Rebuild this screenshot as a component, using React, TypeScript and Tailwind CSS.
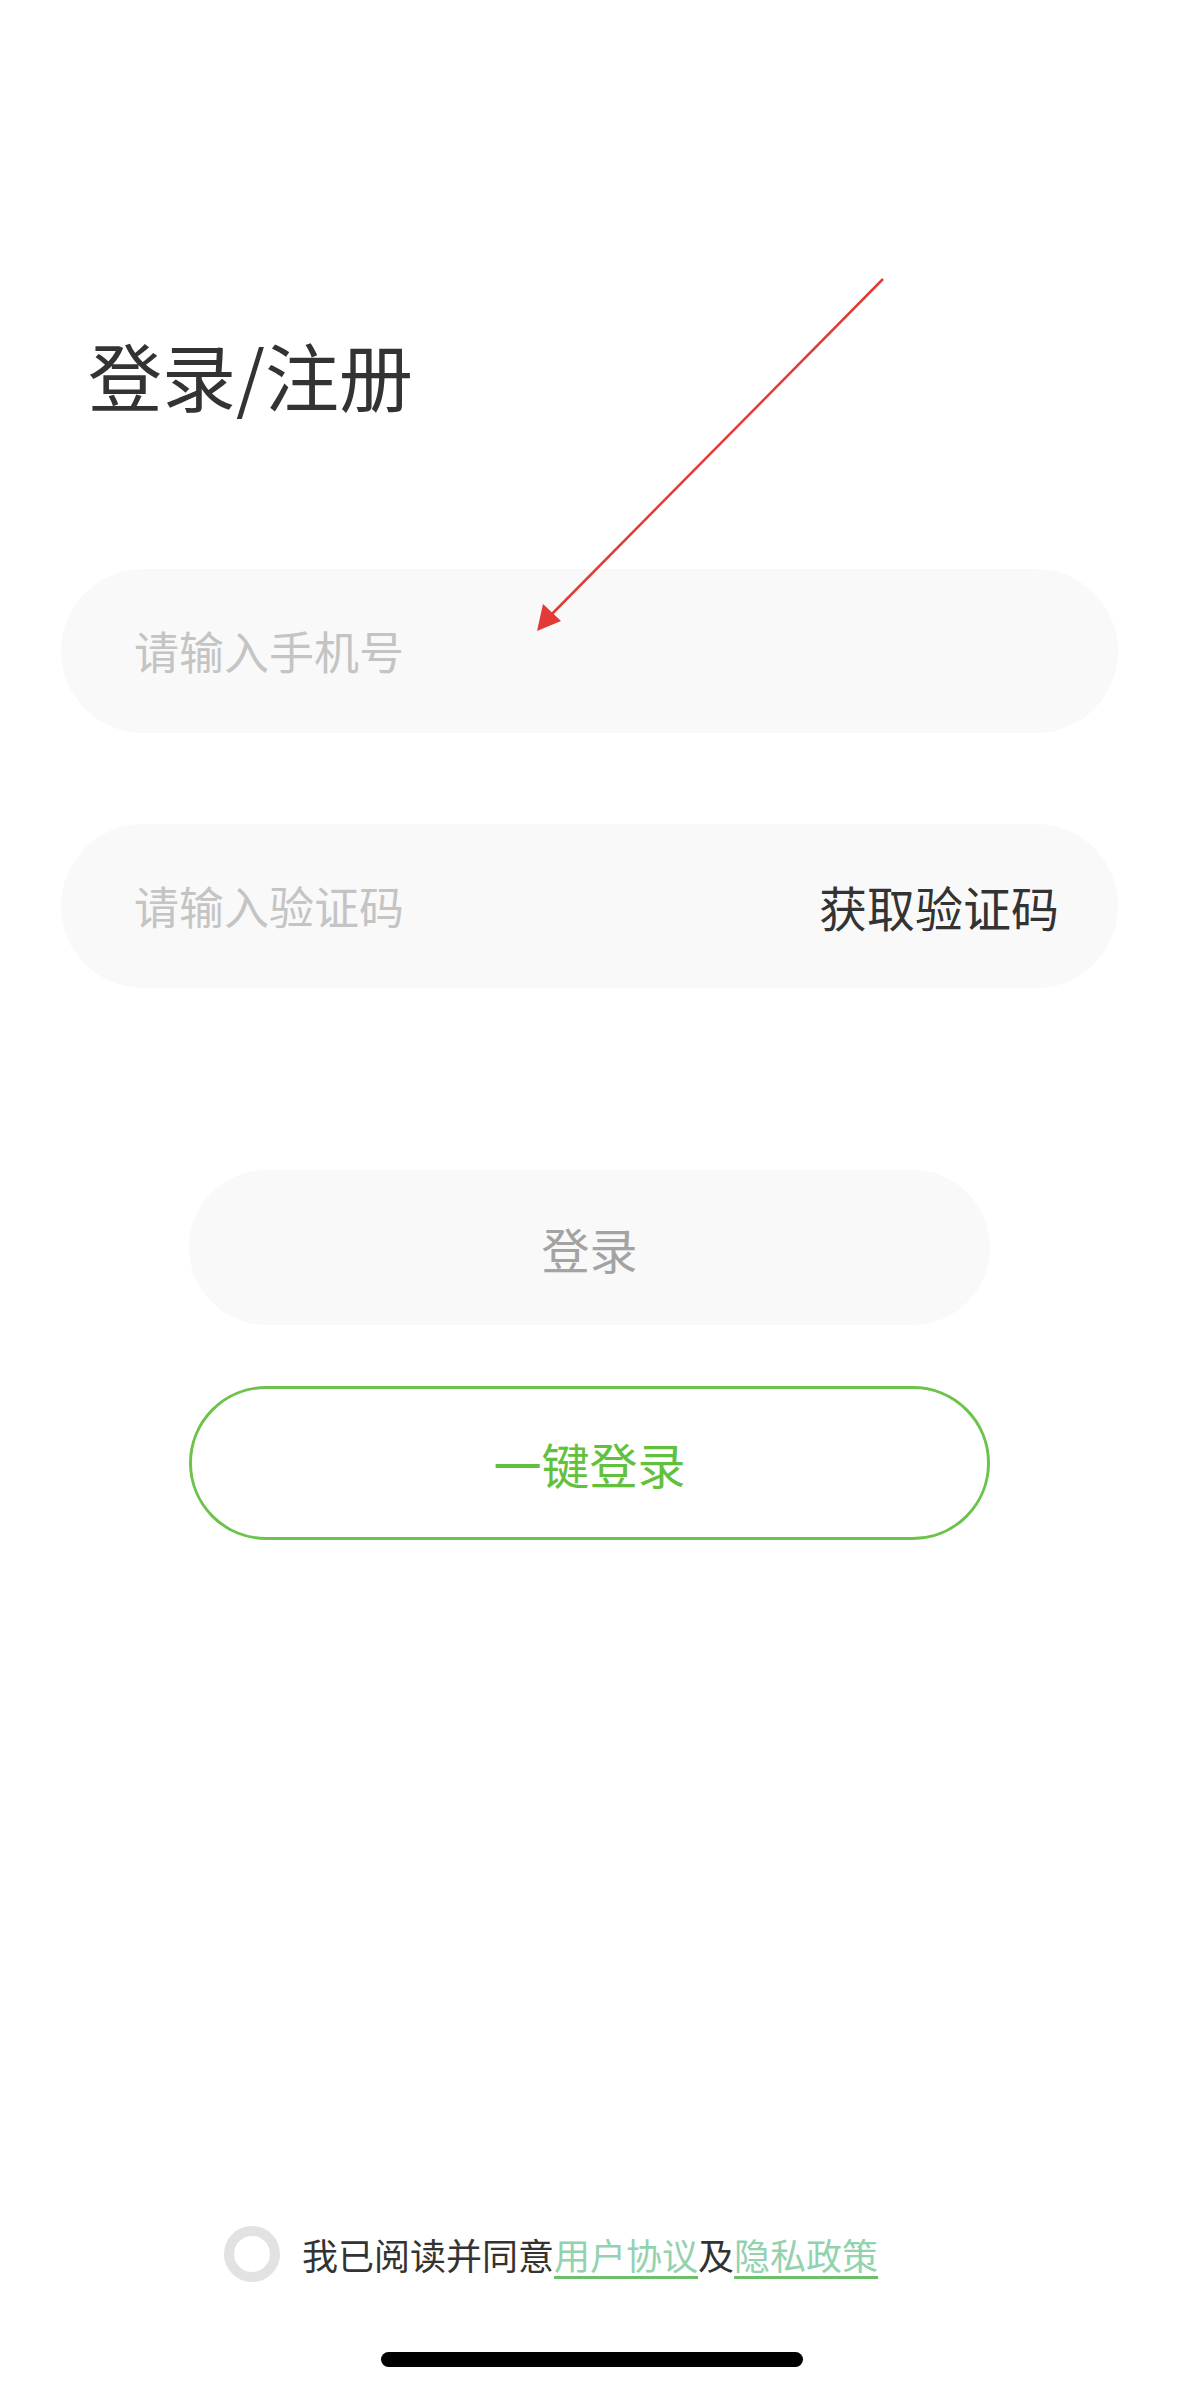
import { useState } from 'react';

const FONT = '"Noto Sans CJK SC", "Noto Sans", sans-serif';

export default function App() {
  const [phone, setPhone] = useState('');
  const [code, setCode] = useState('');
  const [agreed, setAgreed] = useState(false);

  return (
    <div className="relative flex h-[2392px] w-[1179px] flex-col bg-white" style={{ fontFamily: FONT }}>
      <h1 className="ml-[88px] mt-[337px] text-[74px] leading-none font-normal text-[#333333]">登录/注册</h1>

      <div className="mx-[61px] mt-[158px] flex h-[164px] items-center rounded-full bg-[#f9f9f9] pl-[73px] pr-[61px]">
        <input
          type="tel"
          value={phone}
          onChange={(e) => setPhone(e.target.value)}
          placeholder="请输入手机号"
          className="w-full bg-transparent text-[45px] text-[#333333] outline-none placeholder:text-[#c4c4c4]"
        />
      </div>

      <div className="mx-[61px] mt-[91px] flex h-[164px] items-center rounded-full bg-[#f9f9f9] pl-[73px] pr-[59px]">
        <input
          type="text"
          value={code}
          onChange={(e) => setCode(e.target.value)}
          placeholder="请输入验证码"
          className="min-w-0 flex-1 bg-transparent text-[45px] text-[#333333] outline-none placeholder:text-[#c4c4c4]"
        />
        <button className="shrink-0 text-[48px] text-[#333333]">获取验证码</button>
      </div>

      <button className="mx-[189px] mt-[182px] h-[155px] rounded-full bg-[#f9f9f9] text-[48px] text-[#a3a3a3]">
        登录
      </button>

      <button className="mx-[189px] mt-[61px] h-[154px] rounded-full border-[3px] border-[#6cc24a] bg-white text-[48px] text-[#62c13c]">
        一键登录
      </button>

      <div className="mt-auto flex items-center pl-[224px]">
        <button
          onClick={() => setAgreed((a) => !a)}
          className={`h-[56px] w-[56px] rounded-full border-[10px] ${agreed ? 'border-[#6cc24a]' : 'border-[#e2e2e2]'}`}
        />
        <p className="ml-[22px] text-[36px] leading-none text-[#333333]">
          我已阅读并同意
          <a className="text-[#93d2ae] underline decoration-[#6dbf6a] decoration-[3px] underline-offset-[6px]">用户协议</a>
          及
          <a className="text-[#93d2ae] underline decoration-[#6dbf6a] decoration-[3px] underline-offset-[6px]">隐私政策</a>
        </p>
      </div>

      <div className="mb-[25px] ml-[381px] mt-[70px] h-[15px] w-[422px] rounded-full bg-black" />

      {/* annotation arrow drawn over the screenshot */}
      <svg className="pointer-events-none absolute left-0 top-0" width="1179" height="2392">
        <line x1="883" y1="279" x2="548" y2="618" stroke="#e23a36" strokeWidth="2.5" />
        <polygon points="537,631 543,604 561,621" fill="#e23a36" />
      </svg>
    </div>
  );
}
